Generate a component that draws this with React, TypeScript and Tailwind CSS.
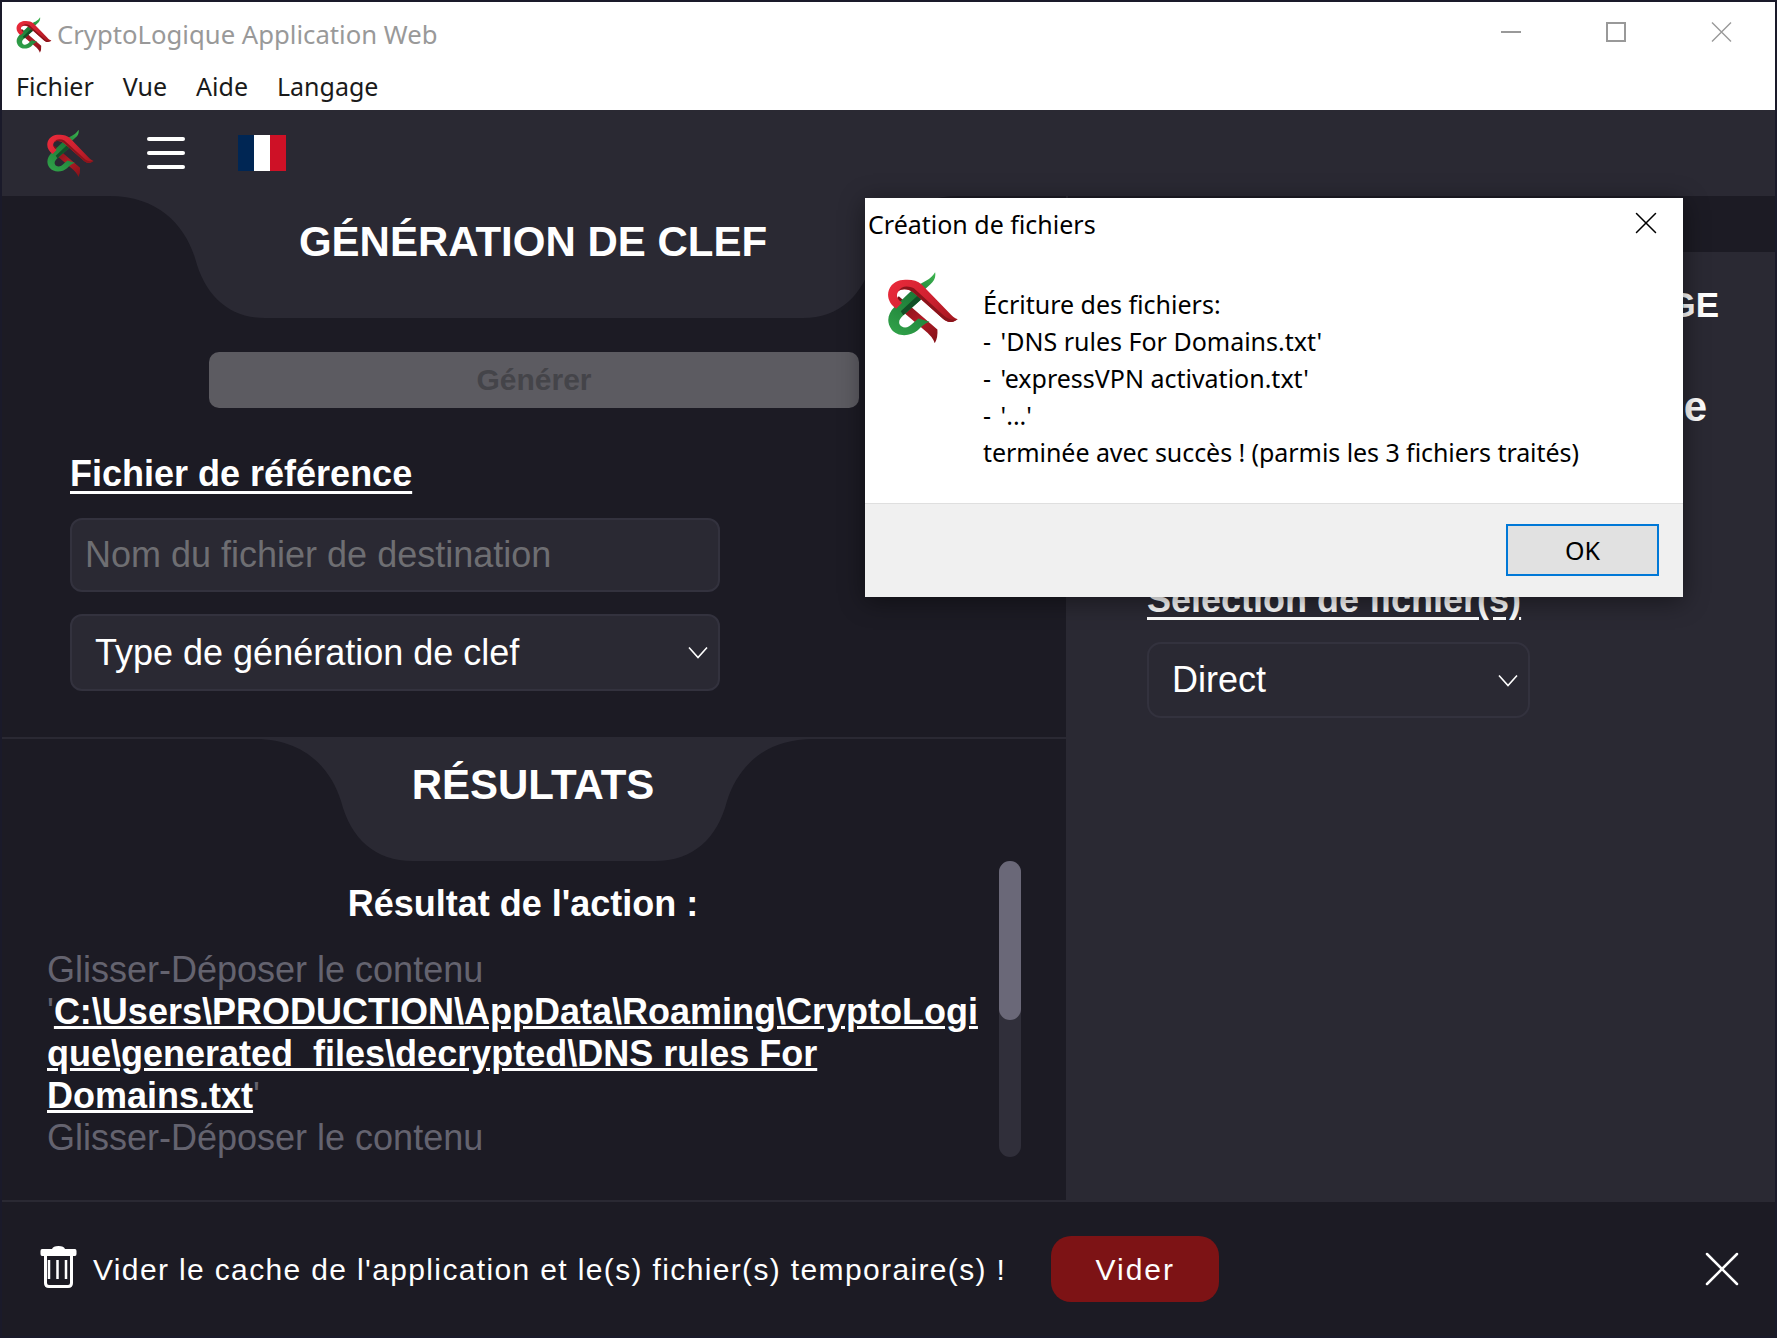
import { X } from "lucide-react"

function Logo({ className }: { className: string }) {
  return (
    <svg viewBox="18 14 216 220" className={className} fill="none">
      <defs>
        <linearGradient id="redBand" gradientUnits="userSpaceOnUse" x1="30" y1="40" x2="220" y2="170">
          <stop offset="0" stopColor="#e92a3a" />
          <stop offset="0.55" stopColor="#cf2130" />
          <stop offset="1" stopColor="#a3171f" />
        </linearGradient>
        <linearGradient id="lowerRed" gradientUnits="userSpaceOnUse" x1="60" y1="100" x2="170" y2="225">
          <stop offset="0" stopColor="#7a1015" />
          <stop offset="0.5" stopColor="#b01b26" />
          <stop offset="1" stopColor="#861219" />
        </linearGradient>
        <linearGradient id="greenBand" gradientUnits="userSpaceOnUse" x1="160" y1="20" x2="50" y2="200">
          <stop offset="0" stopColor="#3cb44f" />
          <stop offset="0.4" stopColor="#1c7a37" />
          <stop offset="1" stopColor="#2f9f48" />
        </linearGradient>
      </defs>
      {/* lower red strand, under the green loop */}
      <path d="M32 108 L52 88 L170 190 Q172 215 162 232 Q156 212 128 190 Z" fill="url(#lowerRed)" />
      {/* green strand */}
      <path
        d="M163 15 C166 30 160 42 148 52 L122 76 L118 100 L66 146 C50 160 50 172 60 180 C72 188 84 182 96 170 L112 156 L146 166 C130 172 122 180 110 192 C90 210 50 215 30 190 C12 165 20 140 38 122 L104 58 C125 45 150 38 163 15 Z"
        fill="url(#greenBand)"
      />
      <path d="M118 78 L58 134 L66 146 L120 98 Z" fill="#124f26" />
      {/* upper red loop */}
      <path
        d="M232 158 C212 172 200 168 186 156 L100 80 C85 66 60 62 50 74 C42 86 48 98 62 108 L44 126 C24 112 14 90 22 68 C32 44 56 36 78 38 C96 38 110 42 122 52 L205 138 C214 148 222 156 232 158 Z"
        fill="url(#redBand)"
      />
      <path d="M232 158 C212 172 200 168 186 156 L96 76 C84 66 62 62 50 74 C58 56 80 54 98 64 L190 148 C204 160 220 162 232 158 Z" fill="#8a141b" />
    </svg>
  )
}

function Tab({ d, viewBox, className }: { d: string; viewBox: string; className: string }) {
  return (
    <svg viewBox={viewBox} className={className} preserveAspectRatio="none">
      <path d={d} fill="#2a2933" />
    </svg>
  )
}

function Chevron() {
  return (
    <svg viewBox="0 0 20 13" className="h-[13px] w-[20px] shrink-0" fill="none" stroke="white" strokeWidth="1.6">
      <path d="M1 1.5 L10 11.5 L19 1.5" />
    </svg>
  )
}

export default function App() {
  return (
    <div className="relative flex h-screen w-full flex-col overflow-hidden border-2 border-[#1a1a2a] bg-[#1c1b24] font-['Liberation_Sans',sans-serif] text-white">
      {/* Native window frame */}
      <div className="h-[108px] shrink-0 bg-white font-['Noto_Sans',sans-serif]">
        <div className="flex h-[68px] items-center pb-[2px] pl-[14px]">
          <Logo className="h-[36px] w-[36px]" />
          <span className="ml-[5px] text-[25.7px] text-[#999999]">CryptoLogique Application Web</span>
          <div className="mb-[6px] ml-auto flex items-center gap-[85px] pr-[43px]">
            <div className="h-[2px] w-[20px] bg-[#999999]" />
            <div className="h-[20px] w-[20px] border-2 border-[#999999]" />
            <svg viewBox="0 0 21 20" className="h-[20px] w-[21px]" fill="none" stroke="#999999" strokeWidth="1.4">
              <path d="M1 0.5 L20 19.5 M20 0.5 L1 19.5" />
            </svg>
          </div>
        </div>
        <div className="flex gap-[29px] pl-[14px] text-[25px] leading-[32px] text-[#1a1a1a]">
          <span>Fichier</span>
          <span>Vue</span>
          <span>Aide</span>
          <span>Langage</span>
        </div>
      </div>

      {/* App toolbar */}
      <div className="flex h-[86px] shrink-0 items-center bg-[#2a2933] pl-[45px]">
        <Logo className="h-[51px] w-[47px]" />
        <div className="ml-[53px] flex w-[38px] flex-col gap-[10px]">
          <div className="h-[4px] rounded-full bg-white" />
          <div className="h-[4px] rounded-full bg-white" />
          <div className="h-[4px] rounded-full bg-white" />
        </div>
        <div className="ml-[53px] flex h-[36px] w-[48px]">
          <div className="flex-1 bg-[#002654]" />
          <div className="flex-1 bg-white" />
          <div className="flex-1 bg-[#ce1126]" />
        </div>
      </div>

      <div className="flex min-h-0 flex-1">
        {/* Left column */}
        <div className="flex w-[1066px] shrink-0 flex-col border-r-2 border-[#2a2933]">
          <section className="relative h-[543px] shrink-0 border-b-2 border-[#2a2933]">
            <Tab
              viewBox="0 0 850 122"
              d="M0 0 C50 0 76 30 86 62 C96 100 120 122 156 122 L694 122 C730 122 754 100 764 62 C774 30 800 0 850 0 Z"
              className="absolute left-[107px] top-0 h-[122px] w-[850px]"
            />
            <h2 className="relative pr-[2px] pt-[21px] text-center text-[42px] font-bold leading-[50px]">GÉNÉRATION DE CLEF</h2>
            <button className="relative ml-[207px] mt-[85px] block h-[56px] w-[650px] rounded-[10px] bg-[#5c5b61] pb-[2px] text-[30px] font-bold text-[#444449]">
              Générer
            </button>
            <h3 className="ml-[68px] mt-[44px] text-[36px] font-bold leading-[44px] underline underline-offset-[5px]">
              Fichier de référence
            </h3>
            <div className="ml-[68px] mt-[22px] flex h-[74px] w-[650px] items-center rounded-[12px] border-2 border-[#33323e] bg-[#2a2933] pl-[13px] text-[36px] text-[#6e6e72]">
              Nom du fichier de destination
            </div>
            <div className="ml-[68px] mt-[22px] flex h-[77px] w-[650px] items-center justify-between rounded-[12px] border-2 border-[#33323e] bg-[#2a2933] pl-[23px] pr-[10px] text-[36px]">
              Type de génération de clef
              <Chevron />
            </div>
          </section>

          <section className="relative min-h-0 flex-1">
            <Tab
              viewBox="0 0 558 122"
              d="M0 0 C50 0 76 30 86 62 C96 100 120 122 158 122 L400 122 C438 122 462 100 472 62 C482 30 508 0 558 0 Z"
              className="absolute left-[253px] top-0 h-[122px] w-[558px]"
            />
            <h2 className="relative pr-[2px] pt-[21px] text-center text-[42px] font-bold leading-[50px]">RÉSULTATS</h2>
            <div className="absolute left-[997px] top-[122px] h-[296px] w-[22px] rounded-full bg-[#302f3a]">
              <div className="h-[159px] rounded-full bg-[#6a6878]" />
            </div>
            <div className="ml-[45px] mt-[73px] w-[935px] text-[36px] leading-[42px] text-[#64636f]">
              <p className="mb-[24px] pl-[17px] text-center font-bold text-white">Résultat de l'action :</p>
              <p>Glisser-Déposer le contenu</p>
              <p className="[overflow-wrap:anywhere]">
                '<a className="font-bold text-white underline">C:\Users\PRODUCTION\AppData\Roaming\CryptoLogique\generated_files\decrypted\DNS rules For Domains.txt</a>'
              </p>
              <p>Glisser-Déposer le contenu</p>
            </div>
          </section>
        </div>

        {/* Right column, mostly covered by the dialog */}
        <div className="flex min-w-0 flex-1 flex-col bg-[#2a2933]">
          <div className="h-[56px] shrink-0 bg-[#1c1b24]" />
          <h2 className="mt-[28px] whitespace-nowrap pr-[56px] text-right text-[35px] font-bold leading-[50px]">CHIFFRAGE</h2>
          <p className="mt-[52px] pr-[68px] text-right text-[42px] font-bold leading-[50px]">Source</p>
          <h3 className="ml-[79px] mt-[146px] text-[36px] font-bold leading-[44px] underline underline-offset-[5px]">
            Sélection de fichier(s)
          </h3>
          <div className="ml-[79px] mt-[20px] flex h-[76px] w-[383px] items-center justify-between rounded-[14px] border-2 border-[#33323e] pl-[23px] pr-[10px] text-[36px]">
            Direct
            <Chevron />
          </div>
        </div>
      </div>

      {/* Cache bar */}
      <div className="flex h-[136px] shrink-0 items-center border-t-2 border-[#2a2933] text-[30px] tracking-[1.36px]">
        <svg viewBox="0 0 37 43" className="mb-[5px] ml-[38px] h-[43px] w-[37px] shrink-0" fill="none" stroke="white">
          <path d="M5.5 10 V38 Q5.5 41.5 9 41.5 H28 Q31.5 41.5 31.5 38 V10" strokeWidth="3" />
          <path d="M2 4 H12 Q13 1 18.5 1 Q24 1 25 4 H35 Q36.5 4 36.5 6 V9 Q36.5 11 35 11 H2 Q0.5 11 0.5 9 V6 Q0.5 4 2 4 Z" fill="white" stroke="none" />
          <path d="M9 15 V34 M17.5 15 V34 M26 15 V34" strokeWidth="2.5" />
        </svg>
        <span className="ml-[16px] whitespace-nowrap">Vider le cache de l'application et le(s) fichier(s) temporaire(s) !</span>
        <button className="ml-[45px] h-[66px] w-[168px] rounded-[20px] bg-[#7d1315] tracking-[2px]">Vider</button>
        <X size={60} strokeWidth={1} className="ml-auto mr-[23px]" />
      </div>

      {/* Native message dialog */}
      <div className="absolute left-[863px] top-[196px] flex h-[399px] w-[818px] flex-col bg-white font-['Noto_Sans',sans-serif] text-[25px] text-black shadow-[0_4px_24px_rgba(0,0,0,0.45)]">
        <div className="flex items-center justify-between pl-[3px] pr-[18px] pt-[8px]">
          <span className="leading-[37px]">Création de fichiers</span>
          <X size={38} strokeWidth={0.95} className="-mt-[4px]" />
        </div>
        <div className="flex flex-1 pl-[22px] pt-[29px]">
          <Logo className="h-[72px] w-[72px]" />
          <div className="ml-[24px] mt-[14px] leading-[37px]">
            <p>Écriture des fichiers:</p>
            <p><span className="mr-[3px]">-</span> 'DNS rules For Domains.txt'</p>
            <p><span className="mr-[3px]">-</span> 'expressVPN activation.txt'</p>
            <p><span className="mr-[3px]">-</span> '...'</p>
            <p className="tracking-[-0.06px]">terminée avec succès ! (parmis les 3 fichiers traités)</p>
          </div>
        </div>
        <div className="flex h-[94px] shrink-0 items-center justify-end border-t border-[#dfdfdf] bg-[#f0f0f0] pb-[2px] pr-[24px]">
          <button className="h-[52px] w-[153px] border-2 border-[#0078d7] bg-[#e1e1e1] pt-[3px]">OK</button>
        </div>
      </div>
    </div>
  )
}
